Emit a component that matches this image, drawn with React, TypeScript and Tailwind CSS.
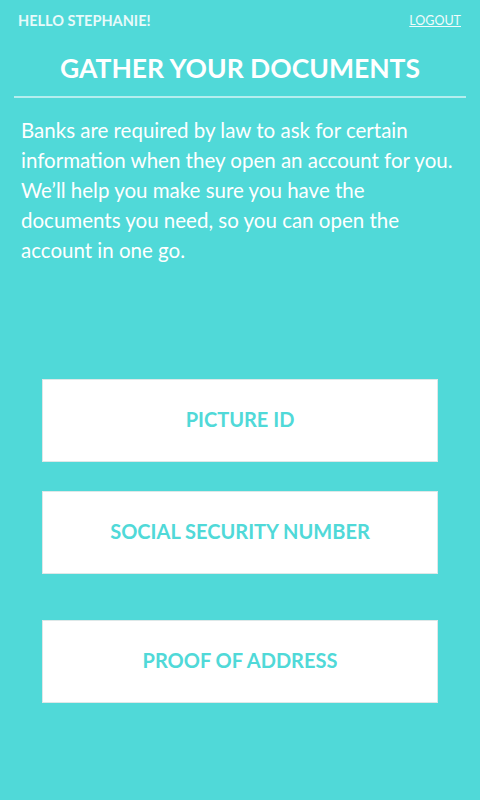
import React from "react";

const docs = [
  { label: "PICTURE ID", gap: "mt-0" },
  { label: "SOCIAL SECURITY NUMBER", gap: "mt-[29px]" },
  { label: "PROOF OF ADDRESS", gap: "mt-[46px]" },
];

const App: React.FC = () => {
  return (
    <div className="min-h-[800px] w-full bg-[#50d9d8] font-['Lato','Liberation_Sans',sans-serif] text-white">
      {/* Top bar */}
      <div className="flex items-center justify-between px-[18px] pt-[10px]">
        <span className="text-[14.5px] font-bold text-[#e8fafa]">HELLO STEPHANIE!</span>
        <a href="#" className="mr-[1px] text-[12.5px] text-[#f0fbfb] underline">
          LOGOUT
        </a>
      </div>

      {/* Title */}
      <h1 className="mt-[19px] text-center text-[26.5px] font-bold leading-[34px]">
        GATHER YOUR DOCUMENTS
      </h1>
      <div className="mx-[14px] mt-[11px] h-[2px] bg-[#b5eeee]"></div>

      {/* Intro */}
      <p className="mt-[17px] px-[21px] text-[20.5px] leading-[30px]">
        Banks are required by law to ask for certain
        <br />
        information when they open an account for you.
        <br />
        We’ll help you make sure you have the
        <br />
        documents you need, so you can open the
        <br />
        account in one go.
      </p>

      {/* Document buttons */}
      <div className="mt-[114px] flex flex-col px-[42px]">
        {docs.map((d) => (
          <button
            key={d.label}
            className={`${d.gap} flex h-[83px] w-[396px] items-center justify-center border border-[#dde8e8] bg-white pb-[3px] text-[20px] font-bold text-[#50d9d8]`}
          >
            {d.label}
          </button>
        ))}
      </div>
    </div>
  );
};

export default App;
